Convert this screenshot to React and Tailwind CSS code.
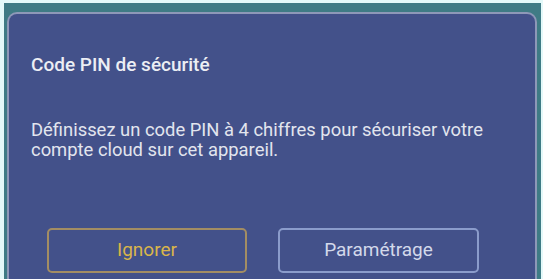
import React from "react";

const App = () => {
  return (
    <div className="w-[543px] h-[279px] overflow-hidden bg-[#e4f9f9] pt-[3px] pl-[4px] pr-[2px] font-['Roboto',sans-serif]">
      <div className="h-full bg-[#3f7b85] pt-[9px] pl-[3px] pr-[4px]">
        <div className="h-full rounded-t-[10px] border-2 border-b-0 border-[#8e98b8] bg-[#43518a] pl-[22px] pr-[10px]">
          <h1 className="pt-[41px] text-[19px] font-medium leading-[20px] text-[#eceef4]">
            Code PIN de sécurité
          </h1>
          <p className="mt-[45px] text-[18.4px] leading-[20px] text-[#e2e5ee] whitespace-nowrap">
            Définissez un code PIN à 4 chiffres pour sécuriser votre
            <br />
            compte cloud sur cet appareil.
          </p>
          <div className="mt-[68px] flex gap-[31px] pl-[16px]">
            <button className="w-[200px] h-[45px] rounded-[5px] border-2 border-[#a38d63] text-[19px] text-[#d9b54a]">
              Ignorer
            </button>
            <button className="w-[201px] h-[45px] rounded-[5px] border-2 border-[#8b9ccb] text-[19px] text-[#d3d9ea]">
              Paramétrage
            </button>
          </div>
        </div>
      </div>
    </div>
  );
};

export default App;
